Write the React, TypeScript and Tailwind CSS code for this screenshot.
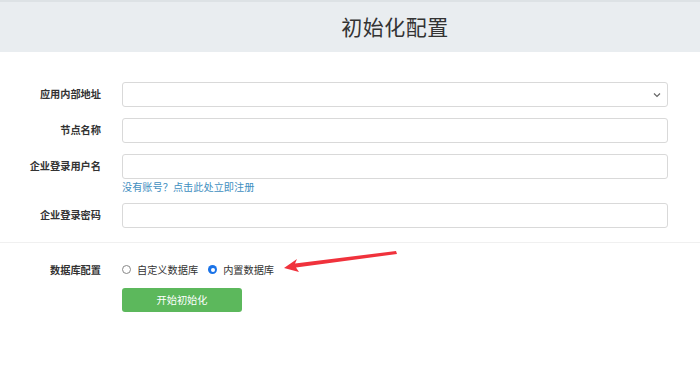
import React from 'react';

const font = { fontFamily: '"Noto Sans CJK SC", "Noto Sans", sans-serif' };

function Label({ children }: { children: React.ReactNode }) {
  return (
    <div className="w-[101px] shrink-0 text-right text-[10.2px] font-bold text-[#333] leading-[24px]">
      {children}
    </div>
  );
}

function Field({ label, children }: { label: string; children: React.ReactNode }) {
  return (
    <div className="flex gap-[21px] items-start">
      <Label>{label}</Label>
      <div className="flex-1">{children}</div>
    </div>
  );
}

function Input() {
  return (
    <input
      type="text"
      className="block w-full h-[25px] rounded-[3px] border border-[#d9d9d9] bg-white px-2 text-[11px] outline-none"
    />
  );
}

export default function App() {
  return (
    <div className="relative w-[700px] h-[379px] bg-white overflow-hidden" style={font}>
      <div className="h-[52px] bg-[#e9edf0] border-t-2 border-[#dde2e5] flex items-center justify-center">
        <h1 className="text-[21px] text-[#333] ml-[90px] tracking-[0.5px]">初始化配置</h1>
      </div>

      <div className="pt-[30px] pr-[32px] flex flex-col gap-[11px]">
        <Field label="应用内部地址">
          <div className="relative h-[25px] rounded-[3px] border border-[#d9d9d9] bg-white">
            <svg className="absolute right-[6px] top-[9px]" width="8" height="6" viewBox="0 0 8 6">
              <path d="M1 1.5 L4 4.5 L7 1.5" fill="none" stroke="#666" strokeWidth="1.2" />
            </svg>
          </div>
        </Field>
        <Field label="节点名称">
          <Input />
        </Field>
        <Field label="企业登录用户名">
          <Input />
          <div className="text-[10.2px] text-[#3f8fbf] leading-[14px] mt-[1px]">没有账号？点击此处立即注册</div>
        </Field>
        <div className="-mt-[2px]">
          <Field label="企业登录密码">
            <Input />
          </Field>
        </div>
      </div>

      <div className="mt-[14px] border-t border-[#f0f0f0]" />

      <div className="pt-[15px] flex flex-col gap-[3px]">
        <div className="flex gap-[21px] items-center">
          <Label>数据库配置</Label>
          <div className="flex items-center text-[10.2px] text-[#333]">
            <span className="w-[9px] h-[9px] rounded-full border border-[#888] bg-white mr-[6px]" />
            <span>自定义数据库</span>
            <span className="ml-[10px] mr-[6px] w-[9px] h-[9px] rounded-full bg-[#1a73e8] flex items-center justify-center">
              <span className="w-[4px] h-[4px] rounded-full bg-white" />
            </span>
            <span>内置数据库</span>
          </div>
        </div>
        <div className="pl-[122px]">
          <button className="w-[120px] h-[24px] rounded-[3px] bg-[#5cb85c] text-white text-[10.2px]">
            开始初始化
          </button>
        </div>
      </div>

      <svg className="absolute left-0 top-0 pointer-events-none" width="700" height="379">
        <path
          d="M396 251 L295 263.5 L297 259 L284 268 L299 272 L296 267.5 L397 254 Z"
          fill="#f0323c"
        />
      </svg>
    </div>
  );
}
